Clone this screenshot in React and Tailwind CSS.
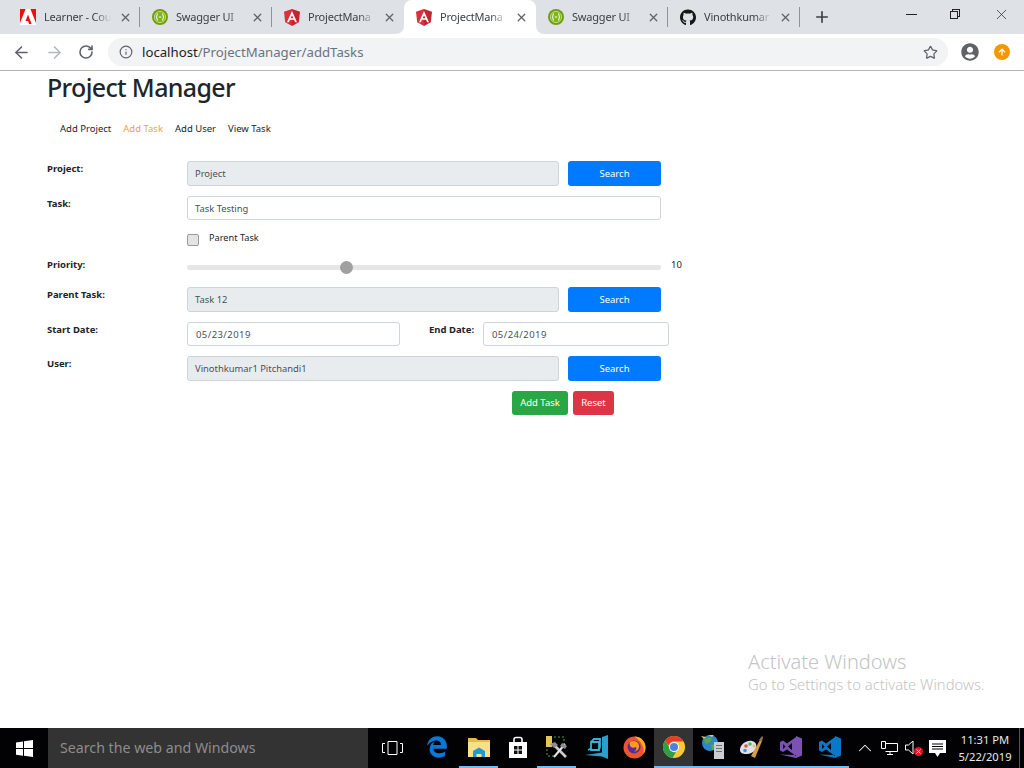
import React from "react";
import { ArrowLeft, ArrowRight, RotateCw, Info, Star, X, Plus, ChevronUp } from "lucide-react";
import { FaGithub, FaUserCircle, FaArrowUp, FaEdgeLegacy } from "react-icons/fa";

function AdobeIcon() {
  return (
    <svg width="16" height="16" viewBox="0 0 16 16">
      <rect width="16" height="16" fill="#fff" />
      <path d="M0 0h5.600L0 14zM10.400 0H16v14zM8 5.500l3.600 9.500H9.200L8 12H5.600z" fill="#e8130f" />
    </svg>
  );
}

function SwaggerIcon() {
  return (
    <svg width="16" height="16" viewBox="0 0 16 16">
      <circle cx="8" cy="8" r="8" fill="#6f9f0c" />
      <circle cx="8" cy="8" r="5.600" fill="#7fb51a" stroke="#d6e5ae" strokeWidth="0.8" />
      <path d="M6 4.500c-1.200 0-.8 2.600-1.500 3.500.7.900.3 3.500 1.500 3.500M10 4.500c1.200 0 .8 2.600 1.500 3.500-.7.900-.3 3.500-1.500 3.500M6.800 8h2.400" fill="none" stroke="#fff" strokeWidth="1" />
    </svg>
  );
}

function AngularIcon() {
  return (
    <svg width="16" height="17" viewBox="0 0 16 17">
      <path d="M8 0L0 2.800l1.200 10.500L8 17z" fill="#d9303e" />
      <path d="M8 0l8 2.800-1.200 10.500L8 17z" fill="#c3242f" />
      <path d="M8 2L3 13.200h1.900l1-2.500h4.200l1 2.500H13zM8 6.200l1.400 3.100H6.600z" fill="#fff" />
    </svg>
  );
}

const tabs = [
  { title: "Learner - Cou", icon: <AdobeIcon /> },
  { title: "Swagger UI", icon: <SwaggerIcon /> },
  { title: "ProjectMana", icon: <AngularIcon /> },
  { title: "ProjectMana", icon: <AngularIcon />, active: true },
  { title: "Swagger UI", icon: <SwaggerIcon /> },
  { title: "Vinothkumar", icon: <FaGithub className="text-[17px] text-[#181717]" /> },
];

function Tab({ tab, hideLine }) {
  return (
    <div className={"relative flex h-full w-[132px] items-center pl-[12px] " + (tab.active ? "rounded-t-[8px] bg-white" : "")}>
      <div className="flex w-[16px] justify-center">{tab.icon}</div>
      <span className="ml-[8px] w-[70px] whitespace-nowrap text-[11px] tracking-[-0.2px] text-[#3c4043] [mask-image:linear-gradient(to_right,black_72%,transparent_96%)]">
        {tab.title}
      </span>
      <X size={13} strokeWidth={2.4} className="ml-[5px] text-[#5f6368]" />
      {!hideLine && <div className="absolute right-0 top-[7px] h-[20px] w-px bg-[#8f9297]" />}
      {tab.active && (
        <>
          <div className="absolute bottom-0 left-[-8px] h-[8px] w-[8px] bg-white">
            <div className="h-full w-full rounded-br-[8px] bg-[#dee1e6]" />
          </div>
          <div className="absolute bottom-0 right-[-8px] h-[8px] w-[8px] bg-white">
            <div className="h-full w-full rounded-bl-[8px] bg-[#dee1e6]" />
          </div>
        </>
      )}
    </div>
  );
}

function BrowserChrome() {
  return (
    <div className="shrink-0">
      <div className="flex h-[34px] bg-[#dee1e6] pl-[8px]">
        {tabs.map((tab, i) => (
          <Tab key={i} tab={tab} hideLine={tab.active || i === 2} />
        ))}
        <Plus size={18} strokeWidth={2.2} className="ml-[13px] mt-[8px] text-[#3c4043]" />
        <div className="ml-auto flex h-full">
          <div className="flex w-[46px] justify-center pt-[14px]">
            <div className="h-px w-[11px] bg-[#222]" />
          </div>
          <div className="flex w-[45px] justify-center pt-[9px] pr-[3px]">
            <div className="relative h-[10px] w-[10px]">
              <div className="absolute left-[2px] top-0 h-[8px] w-[8px] border border-[#222]" />
              <div className="absolute bottom-0 left-0 h-[8px] w-[8px] border border-[#222] bg-[#dee1e6]" />
            </div>
          </div>
          <div className="flex w-[45px] justify-center pt-[6px]">
            <X size={17} strokeWidth={1} className="text-[#222]" />
          </div>
        </div>
      </div>
      <div className="flex h-[37px] items-center border-b border-[#b4b4b4] bg-white">
        <ArrowLeft size={19} strokeWidth={2} className="ml-[12px] text-[#5f6368]" />
        <ArrowRight size={19} strokeWidth={2} className="ml-[14px] text-[#b5b7ba]" />
        <RotateCw size={16} strokeWidth={2.4} className="ml-[14px] text-[#5f6368]" />
        <div className="ml-[14px] flex h-[28px] w-[840px] items-center rounded-full bg-[#f1f3f4] pl-[11px] pr-[10px]">
          <Info size={14} strokeWidth={2} className="text-[#5f6368]" />
          <span className="ml-[9px] mt-[1px] text-[13.200px] text-[#202124]">
            localhost<span className="text-[#6b7280]">/ProjectManager/addTasks</span>
          </span>
          <Star size={15} strokeWidth={2} className="ml-auto text-[#5f6368]" />
        </div>
        <FaUserCircle className="ml-[13px] text-[18px] text-[#5f6368]" />
        <div className="ml-[15px] flex h-[16px] w-[16px] items-center justify-center rounded-full bg-[#f29900]">
          <FaArrowUp className="text-[8px] text-white" />
        </div>
      </div>
    </div>
  );
}

function Label({ children, className = "" }) {
  return <div className={"h-[14px] text-[9.500px] font-bold leading-[16px] text-[#212529] " + className}>{children}</div>;
}

function Field({ children, className = "", disabled }) {
  return (
    <div
      className={
        "flex items-center rounded-[3px] border border-[#ced4da] text-[#495057] " +
        (disabled ? "bg-[#e9ecef] pt-[1px] " : "bg-white pt-[2px] ") +
        className
      }
    >
      {children}
    </div>
  );
}

function SearchButton() {
  return (
    <button className="ml-[9px] h-[25px] w-[93px] rounded-[3px] bg-[#007bff] pt-[1px] text-[9.500px] text-white">Search</button>
  );
}

function Row({ label, className = "", children }) {
  return (
    <div className={"flex " + className}>
      <Label className="w-[140px]">{label}</Label>
      {children}
    </div>
  );
}

function AddTaskForm() {
  return (
    <div className="mt-[25px] w-[640px]">
      <Row label="Project:">
        <Field disabled className="h-[25px] w-[372px] pl-[7px] text-[9.400px]">Project</Field>
        <SearchButton />
      </Row>
      <Row label="Task:" className="mt-[10px]">
        <Field className="h-[24px] w-[474px] pl-[7px] text-[9.400px]">Task Testing</Field>
      </Row>
      <div className="mt-[14px] flex h-[12px] items-center pl-[140px]">
        <div className="h-[12px] w-[12px] rounded-[2px] border border-[#9a9a9a] bg-[#e4e4e4]" />
        <span className="ml-[10px] mb-[4px] text-[9.200px] leading-[10px] text-[#212529]">Parent Task</span>
      </div>
      <Row label="Priority:" className="mt-[11px] h-[16px]">
        <div className="relative mt-[8px] h-[5px] w-[474px] rounded-full bg-[#e6e6e6]">
          <div className="absolute left-[153px] top-[-4px] h-[13px] w-[13px] rounded-full bg-[#a0a0a0]" />
        </div>
        <span className="ml-[10px] text-[9.500px] leading-[16px] text-[#212529]">10</span>
      </Row>
      <Row label="Parent Task:" className="mt-[14px]">
        <Field disabled className="h-[25px] w-[372px] pl-[7px] text-[9.400px]">Task 12</Field>
        <SearchButton />
      </Row>
      <Row label="Start Date:" className="mt-[10px]">
        <Field className="h-[24px] w-[213px] pl-[8px] text-[9.500px] tracking-[0.42px]">05/23/2019</Field>
        <Label className="ml-[29px] w-[54px]">End Date:</Label>
        <Field className="h-[24px] w-[186px] pl-[8px] text-[9.500px] tracking-[0.42px]">05/24/2019</Field>
      </Row>
      <Row label="User:" className="mt-[10px]">
        <Field disabled className="h-[25px] w-[372px] pl-[7px] text-[9.400px]">Vinothkumar1 Pitchandi1</Field>
        <SearchButton />
      </Row>
      <div className="mt-[10px] flex pl-[465px]">
        <button className="h-[24px] w-[56px] rounded-[3px] bg-[#28a745] text-[9.500px] text-white">Add Task</button>
        <button className="ml-[5px] h-[24px] w-[41px] rounded-[3px] bg-[#dc3545] text-[9.500px] text-white">Reset</button>
      </div>
    </div>
  );
}

function WinLogo() {
  return (
    <svg width="17" height="17" viewBox="0 0 17 17" fill="#fff">
      <path d="M0 2.400l7-1v6.700H0zM8 1.300L17 0v8.100H8zM0 9h7v6.700l-7-1zM8 9h9v8l-9-1.300z" />
    </svg>
  );
}

function FolderIcon() {
  return (
    <svg width="22" height="20" viewBox="0 0 22 20">
      <path d="M0 1h8l2 2h12v15H0z" fill="#e9b949" />
      <path d="M0 5h22v15H0z" fill="#fbe08a" />
      <path d="M5 20v-6l6-3.500 6 3.500v6h-3.500v-3h-5v3z" fill="#1d9bd8" />
    </svg>
  );
}

function StoreIcon() {
  return (
    <svg width="20" height="22" viewBox="0 0 20 22">
      <path d="M1 6h18v16H1z" fill="#fff" />
      <path d="M6 7V3.500a2 2 0 0 1 2-2h4a2 2 0 0 1 2 2V7" fill="none" stroke="#fff" strokeWidth="1.600" />
      <path d="M6 10h3.500v3.500H6zM10.500 10H14v3.500h-3.500zM6 14.500h3.500V18H6zM10.500 14.500H14V18h-3.500z" fill="#111" />
    </svg>
  );
}

function ToolsIcon() {
  return (
    <svg width="24" height="24" viewBox="0 0 24 24">
      <rect x="1" y="1" width="6" height="11" fill="#e8c35a" />
      <path d="M9 2h10v10M2 14v7h8" fill="none" stroke="#4fa24a" strokeWidth="1" strokeDasharray="2 2" />
      <path d="M8 9l13 13" stroke="#c9c9c9" strokeWidth="2.600" />
      <path d="M20 9L9 22" stroke="#e8e8e8" strokeWidth="2" />
      <path d="M5 9l5-2 3 3-4 3zM17 8l5 3-2 3-5-3z" fill="#8d8d8d" />
    </svg>
  );
}

function BlueBoxIcon() {
  return (
    <svg width="24" height="24" viewBox="0 0 24 24">
      <path d="M18 2l6-2v24l-6-2.500L1 20l17-2.500z" fill="#2a9fc9" />
      <path d="M4 15l3-1.500M7 7h8v8H7zM7 7l3-3h6v8l-1 3" fill="none" stroke="#36b0d8" strokeWidth="1.800" />
    </svg>
  );
}

function FirefoxIcon() {
  return (
    <svg width="23" height="24" viewBox="0 0 23 24">
      <circle cx="11.500" cy="12.500" r="11" fill="#f0542e" />
      <path d="M11.500 1.500a11 11 0 0 1 11 11c0 3-1 5-2 6.500 1-5-1-12-9-17.500z" fill="#ffb01f" />
      <circle cx="11" cy="12" r="6.500" fill="#5b2a9d" />
      <path d="M7 7c3-2 8-1 9 3 .8 4-2.500 7-6 6.500 3 0 4-2.500 3-4.500-2 1-4 1-5.500-.5C6.500 10 6.500 8 7 7z" fill="#ff9a1f" />
    </svg>
  );
}

function ChromeIcon() {
  return (
    <svg width="22" height="22" viewBox="0 0 24 24">
      <circle cx="12" cy="12" r="12" fill="#fcc934" />
      <path d="M12 0a12 12 0 0 1 10.400 6H12a6 6 0 0 0-5.800 4.500L2.400 4.800A12 12 0 0 1 12 0z" fill="#e33b2e" />
      <path d="M2.400 4.800l4.800 8.400a6 6 0 0 0 6.800 4.500L10.300 23.900A12 12 0 0 1 2.400 4.800z" fill="#2d9f48" />
      <circle cx="12" cy="12" r="5.500" fill="#fff" />
      <circle cx="12" cy="12" r="4.400" fill="#4a80e8" />
    </svg>
  );
}

function GlobeServerIcon() {
  return (
    <svg width="24" height="24" viewBox="0 0 24 24">
      <circle cx="9" cy="8" r="8" fill="#2f86c8" />
      <path d="M3 5c3-3 6-3 8-2l-2 4-4 2zM10 10l5-1v5l-4 1z" fill="#5fa83f" />
      <path d="M0 1l5 1-2 2zM7 0h6l-2 2z" fill="#e8c35a" />
      <path d="M13 7h10v17H13z" fill="#c9ccd0" />
      <path d="M15 10h6v1h-6zM15 13h6v1h-6zM15 16h6v1h-6z" fill="#6d7278" />
    </svg>
  );
}

function PaintIcon() {
  return (
    <svg width="25" height="24" viewBox="0 0 25 24">
      <path d="M1 15C1 9 8 5 13 6c4 1 5 4 4 7-1 4-6 6-10 6-3 0-6-1-6-4z" fill="#dfe3e8" />
      <circle cx="7" cy="11" r="1.800" fill="#e04e4e" />
      <circle cx="11" cy="9" r="1.800" fill="#59b36b" />
      <circle cx="15" cy="11" r="1.500" fill="#e8c35a" />
      <circle cx="6" cy="15.500" r="1.800" fill="#4a90d9" />
      <path d="M12 21L21 5l2 1-7 17z" fill="#d99a4a" />
      <path d="M20 5l3-4 1 1-1 5z" fill="#8d7352" />
    </svg>
  );
}

function VsIcon() {
  return (
    <svg width="24" height="24" viewBox="0 0 24 24">
      <path fillRule="evenodd" d="M17 1l6 2.500v17L17 23 1 19.500 17 20zM1 7l3-1.500 4 3L17 2v19L8 14.500 4 17l-3-1.500zM4 9v5l2.500-2.500zM13 8l-4 3.500 4 3.500z" fill="#7b52b3" />
    </svg>
  );
}

function VscodeIcon() {
  return (
    <svg width="24" height="24" viewBox="0 0 24 24">
      <path fillRule="evenodd" d="M17 1l6 2.500v17L17 23 1 19.500 17 20zM1 7l3-1.500 4 3L17 2v19L8 14.500 4 17l-3-1.500zM4 9v5l2.500-2.500zM13 8l-4 3.500 4 3.500z" fill="#0a78c8" />
    </svg>
  );
}

const pinned = [
  { icon: <FaEdgeLegacy className="text-[22px] text-[#0a78d7]" />, nudge: "mr-[6px]" },
  { icon: <FolderIcon />, open: true },
  { icon: <StoreIcon /> },
  { icon: <ToolsIcon />, open: true },
  { icon: <BlueBoxIcon /> },
  { icon: <FirefoxIcon /> },
  { icon: <ChromeIcon />, open: true, active: true },
  { icon: <GlobeServerIcon />, open: true },
  { icon: <PaintIcon />, open: true },
  { icon: <VsIcon />, open: true },
  { icon: <VscodeIcon />, open: true },
];

function Taskbar() {
  return (
    <div className="flex h-[40px] shrink-0 bg-[#020205] text-white">
      <div className="flex w-[48px] items-center justify-center">
        <WinLogo />
      </div>
      <div className="flex w-[320px] items-center bg-[#333333] pl-[12px] text-[14.200px] text-[#8d8d8d]">
        Search the web and Windows
      </div>
      <div className="flex w-[52px] items-center pl-[14px]">
        <svg width="21" height="14" viewBox="0 0 21 14" fill="none" stroke="#fff" strokeWidth="1">
          <path d="M6 .5h9v13H6zM3 2.500H.5v9H3M18 2.500h2.500v9H18" />
        </svg>
      </div>
      <div className="flex">
        {pinned.map((item, i) => (
          <div
            key={i}
            className={
              "flex h-full w-[39px] items-center justify-center border-b-[2px] " +
              (item.open ? "border-[#76b9ed] " : "border-transparent ") +
              (item.active ? "bg-[#333333]" : "")
            }
          >
            <div className={item.nudge || ""}>{item.icon}</div>
          </div>
        ))}
      </div>
      <div className="ml-[5px] flex items-center">
        <ChevronUp size={22} strokeWidth={1.100} />
        <svg className="ml-[5px]" width="17" height="15" viewBox="0 0 17 15" fill="none" stroke="#fff" strokeWidth="1">
          <path d="M.5 .5h4v7h-4zM4.500 2.500h12v8h-12M9 10.500v3M6 13.500h6" />
        </svg>
        <div className="relative ml-[7px] h-[16px] w-[18px]">
          <svg width="11" height="15" viewBox="0 0 11 15" fill="none" stroke="#fff" strokeWidth="1">
            <path d="M.5 5h3L8 1v13L3.500 10h-3z" />
          </svg>
          <div className="absolute bottom-0 right-0 flex h-[9px] w-[9px] items-center justify-center rounded-full bg-[#e81123]">
            <X size={7} strokeWidth={3} />
          </div>
        </div>
        <svg className="ml-[6px]" width="17" height="17" viewBox="0 0 17 17" fill="#fff">
          <path d="M0 0h17v13h-6l-2.500 4-2.500-4H0z" />
          <path d="M3 3.500h11v1H3zM3 6h11v1H3zM3 8.500h11v1H3z" fill="#020205" />
        </svg>
        <div className="ml-[12px] flex w-[54px] flex-col items-center text-[11.200px] leading-[17px] text-[#e8e8e8]">
          <span>11:31 PM</span>
          <span>5/22/2019</span>
        </div>
      </div>
      <div className="ml-auto h-full w-[5px] border-l border-[#555]" />
    </div>
  );
}

export default function App() {
  return (
    <div className="flex h-screen flex-col overflow-hidden bg-white font-['Noto_Sans',sans-serif]">
      <BrowserChrome />
      <div className="relative flex-1 pl-[47px]">
        <h1 className="text-[25px] font-medium leading-[33px] tracking-[-0.65px] text-[#212529]">Project Manager</h1>
        <nav className="mt-[18px] flex gap-[12px] pl-[13px] text-[9.500px] leading-[14px] text-[#212529]">
          <a>Add Project</a>
          <a className="text-[#e5a64b]">Add Task</a>
          <a>Add User</a>
          <a>View Task</a>
        </nav>
        <AddTaskForm />
        <div className="absolute left-[748px] top-[579px] font-light text-[#c4c4c4]">
          <div className="text-[20px] leading-[24px]">Activate Windows</div>
          <div className="text-[14.800px] leading-[20px]">Go to Settings to activate Windows.</div>
        </div>
      </div>
      <Taskbar />
    </div>
  );
}
